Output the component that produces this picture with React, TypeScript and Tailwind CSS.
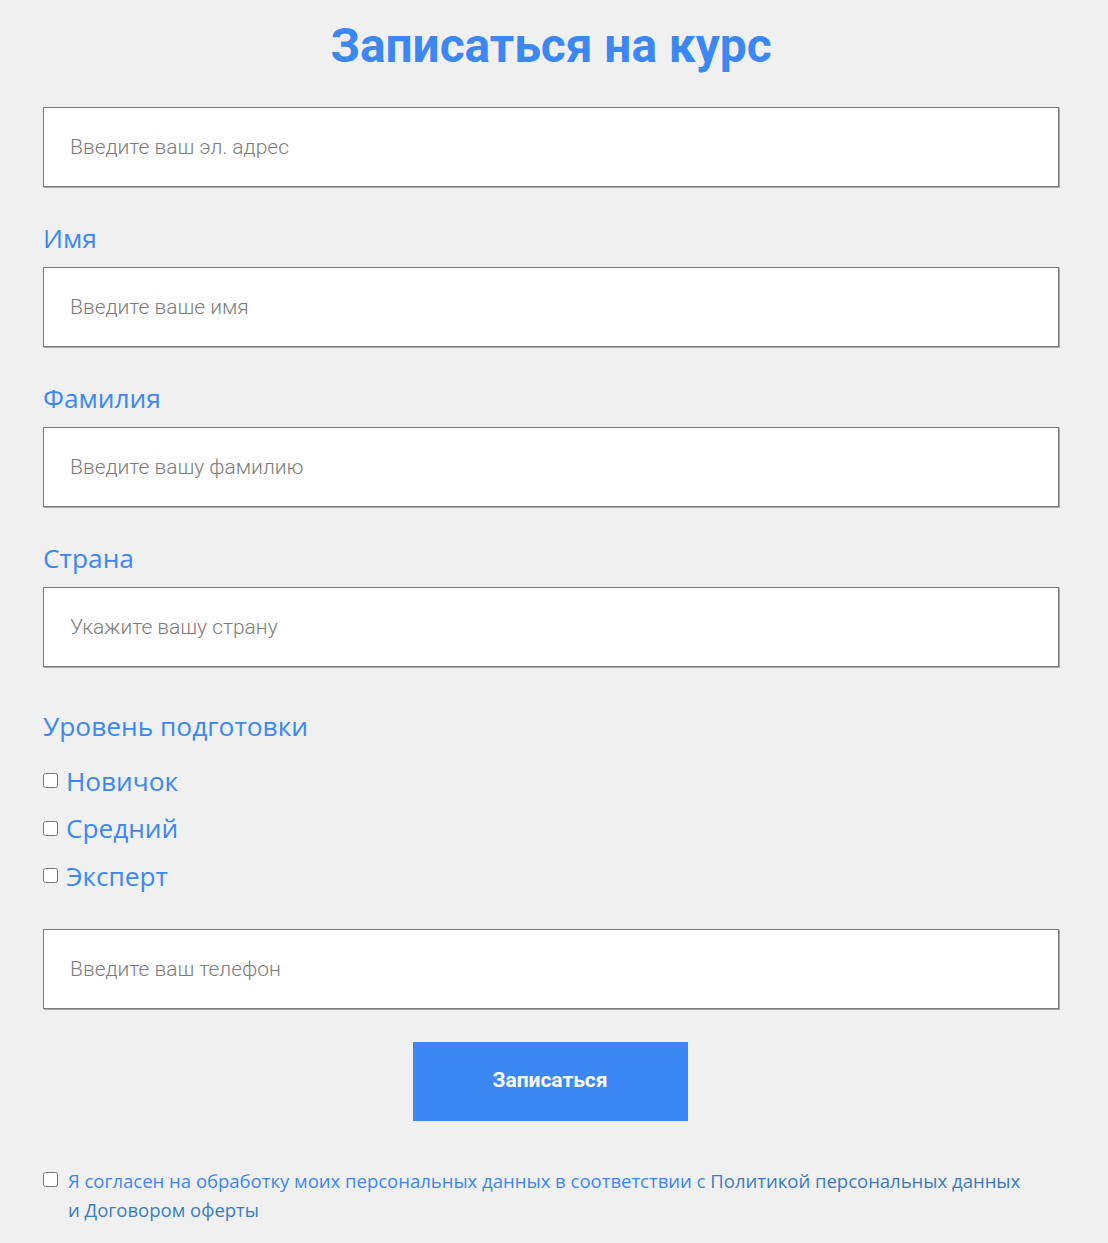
import React from "react";

const inputCls =
  "block w-full h-[80px] bg-white border border-[#7a7a7a] shadow-[1px_1px_0_#a8a8a8] px-[26px] text-[21px] font-light text-[#333] placeholder:text-[#7d7d7d] outline-none";
const inputFont = { fontFamily: "Roboto, 'Liberation Sans', sans-serif" };
const labelCls = "block text-[26.3px] leading-[37px] text-[#3b88f4] mt-[33px] mb-[10px]";
const os = { fontFamily: "'Open Sans', 'Noto Sans', sans-serif" };

function Field({ label, placeholder }: { label: string; placeholder: string }) {
  return (
    <div>
      <label className={labelCls} style={os}>
        {label}
      </label>
      <input className={inputCls} style={inputFont} placeholder={placeholder} />
    </div>
  );
}

function Level({ text }: { text: string }) {
  return (
    <label className="flex items-center h-[47.5px] gap-[8px]" style={os}>
      <input type="checkbox" className="w-[15px] h-[15px] m-0" />
      <span className="text-[26.2px] leading-[36px] text-[#3b88f4]">{text}</span>
    </label>
  );
}

export default function App() {
  return (
    <div className="min-h-[1243px] bg-[#f0f0f0]">
      <div className="w-[1016px] ml-[43px] pt-[17px] pb-[20px]">
        <h1
          className="text-center text-[47.8px] leading-[58px] font-bold text-[#3b88f4]"
          style={{ fontFamily: "Roboto, 'Liberation Sans', sans-serif" }}
        >
          Записаться на курс
        </h1>
        <input className={inputCls + " mt-[32px]"} style={inputFont} placeholder="Введите ваш эл. адрес" />
        <Field label="Имя" placeholder="Введите ваше имя" />
        <Field label="Фамилия" placeholder="Введите вашу фамилию" />
        <Field label="Страна" placeholder="Укажите вашу страну" />

        <div className="mt-[41px] text-[26.3px] leading-[37px] text-[#3b88f4]" style={os}>
          Уровень подготовки
        </div>
        <div className="mt-[12px] flex flex-col">
          <Level text="Новичок" />
          <Level text="Средний" />
          <Level text="Эксперт" />
        </div>

        <input className={inputCls + " mt-[29px]"} style={inputFont} placeholder="Введите ваш телефон" />

        <div className="flex justify-center mt-[33px]">
          <button
            className="w-[275px] h-[79px] bg-[#3b88f4] text-white text-[21px] font-bold -translate-x-[1px]"
            style={{ fontFamily: "Roboto, 'Liberation Sans', sans-serif" }}
          >
            Записаться
          </button>
        </div>

        <div className="flex items-start mt-[45px] gap-[10px]" style={os}>
          <input type="checkbox" className="w-[15px] h-[15px] m-0 mt-[6px] shrink-0" />
          <p className="text-[18.5px] leading-[29px] text-[#3b88f4]">
            Я согласен на обработку моих персональных данных в соответствии с{" "}
            <a className="text-[#3a7cc0]">Политикой персональных данных</a>
            <br />
            <a className="text-[#3a7cc0]">и Договором оферты</a>
          </p>
        </div>
      </div>
    </div>
  );
}
